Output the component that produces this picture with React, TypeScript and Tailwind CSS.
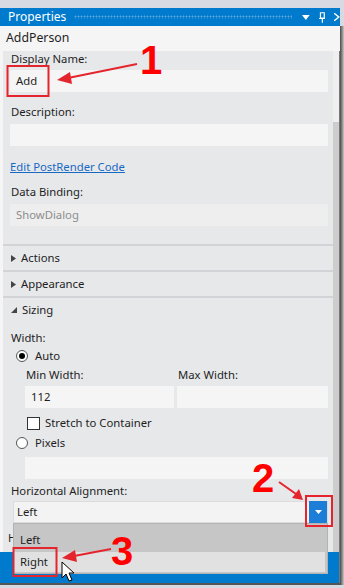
import React from "react";

const font = { fontFamily: '"Segoe UI", "Noto Sans", "Open Sans", sans-serif' };

const Label = ({ children, className = "" }: { children: React.ReactNode; className?: string }) => (
  <div className={`h-[16px] leading-[16px] text-[11.3px] text-[#1e1e1e] ${className}`}>{children}</div>
);

const Input = ({ value = "", className = "", muted = false }: { value?: string; className?: string; muted?: boolean }) => (
  <div
    className={`h-[22px] flex items-center px-[6px] text-[11.3px] ${
      muted ? "bg-[#eeeeef] text-[#8d8d8d]" : "bg-[#f5f5f5] text-[#1e1e1e]"
    } ${className}`}
  >
    {value}
  </div>
);

const Section = ({ title, open = false }: { title: string; open?: boolean }) => (
  <div className="border-t-2 border-[#d2d3d6]">
    <div className="h-[24px] flex items-center gap-[5px] pl-[8px] text-[11.3px] text-[#1e1e1e]">
      {open ? (
        <svg width="6" height="6" viewBox="0 0 6 6">
          <path d="M6 0 L6 6 L0 6 Z" fill="#444" />
        </svg>
      ) : (
        <svg width="5" height="7" viewBox="0 0 5 7">
          <path d="M0 0 L5 3.5 L0 7 Z" fill="#444" />
        </svg>
      )}
      <span>{title}</span>
    </div>
  </div>
);

const Radio = ({ label, checked = false }: { label: string; checked?: boolean }) => (
  <div className="h-[16px] flex items-center gap-[7px] pl-[8px] text-[11.3px] text-[#1e1e1e]">
    <div className="w-[12px] h-[12px] rounded-full border border-[#555] bg-white flex items-center justify-center">
      {checked && <div className="w-[6px] h-[6px] rounded-full bg-black" />}
    </div>
    <span>{label}</span>
  </div>
);

export default function App() {
  return (
    <div className="relative w-[344px] h-[588px] bg-[#d8dae3] overflow-hidden" style={font}>
      <div className="h-[8px]" />
      <div className="flex">
        <div className="w-[340px] flex flex-col">
          {/* title bar */}
          <div className="h-[18px] bg-[#007acc] flex items-center pl-[8px] text-white text-[12px]">
            <span>Properties</span>
            <div className="ml-[8px] w-[227px] h-[4px] bg-[radial-gradient(circle,#59a7e0_0.8px,transparent_1.2px)] bg-[length:3px_3px]" />
            <svg className="ml-[10px]" width="8" height="5" viewBox="0 0 8 5">
              <path d="M0 0 L8 0 L4 5 Z" fill="white" />
            </svg>
            <svg className="ml-[9px]" width="7" height="11" viewBox="0 0 7 11">
              <path d="M1.5 0.5 H5.5 V6 H1.5 Z M0 6.5 H7 M3.5 6.5 V11" stroke="white" strokeWidth="1.2" fill="none" />
            </svg>
            <svg className="ml-[9px]" width="6" height="8" viewBox="0 0 6 8">
              <path d="M0 0 L5 4 L0 8" stroke="white" strokeWidth="1.5" fill="none" />
            </svg>
          </div>
          {/* selected element */}
          <div className="h-[25px] bg-[#f5f5f5] flex items-center pl-[6px] text-[12.3px] text-[#1e1e1e]">AddPerson</div>
          {/* body */}
          <div className="h-[501px] flex bg-[#f5f5f5] border-r border-[#777]">
            <div className="flex-1 ml-[3px] bg-[#e7e8ea]">
              <div className="pl-[7px] pr-[5px]">
                <Label className="pl-[1px]">Display Name:</Label>
                <Input value="Add" className="mt-[3px]" />
                <Label className="mt-[12px] pl-[1px]">Description:</Label>
                <Input className="mt-[4px]" />
                <div className="mt-[13px] h-[16px] leading-[16px] text-[11.3px] text-[#1769c4] underline">Edit PostRender Code</div>
                <Label className="mt-[9px] pl-[1px]">Data Binding:</Label>
                <Input value="ShowDialog" muted className="mt-[4px]" />
              </div>
              <div className="mt-[18px]">
                <Section title="Actions" />
                <Section title="Appearance" />
                <Section title="Sizing" open />
              </div>
              <div className="pl-[7px] pr-[5px]">
                <Label className="mt-[8px] pl-[1px]">Width:</Label>
                <div className="mt-[2px] -ml-[2px]">
                  <Radio label="Auto" checked />
                </div>
                <div className="pl-[15px]">
                  <div className="mt-[3px] grid grid-cols-[149px_1fr] gap-x-[3px] gap-y-[3px]">
                    <Label className="pl-[1px]">Min Width:</Label>
                    <Label className="pl-[1px]">Max Width:</Label>
                    <Input value="112" />
                    <Input />
                  </div>
                  <div className="mt-[7px] h-[16px] flex items-center gap-[5px] pl-[2px] text-[11.3px] text-[#1e1e1e]">
                    <div className="w-[13px] h-[13px] border border-[#333] bg-white" />
                    <span>Stretch to Container</span>
                  </div>
                </div>
                <div className="mt-[4px] -ml-[2px]">
                  <Radio label="Pixels" />
                </div>
                <Input className="mt-[6px] ml-[15px]" />
                <Label className="mt-[4px] pl-[1px]">Horizontal Alignment:</Label>
                <div className="relative mt-[2px] ml-[3px] h-[22px] bg-[#f3f3f3] border border-[#dcdcdc] flex items-center">
                  <span className="pl-[3px] text-[11.3px] text-[#1e1e1e]">Left</span>
                  <div className="ml-auto w-[18px] h-[22px] -my-px bg-[#1c7ed6] flex items-center justify-center">
                    <svg width="7" height="4" viewBox="0 0 7 4">
                      <path d="M0 0 L7 0 L3.5 4 Z" fill="white" />
                    </svg>
                  </div>
                  {/* open list */}
                  <div className="absolute left-[-1px] right-[-1px] top-[21px] h-[51px] bg-[#c6c6c6] border border-[#b3b3b3] z-10 pt-[6px]">
                    <div className="h-[20px] flex items-center pl-[6px] text-[11.3px] text-[#1e1e1e]">Left</div>
                    <div className="mt-[2px] mr-[2px] h-[20px] bg-[#e1e1e1] flex items-center pl-[6px] text-[11.3px] text-[#1e1e1e]">Right</div>
                  </div>
                </div>
                <Label className="mt-[7px] -ml-[2px]">Height:</Label>
              </div>
            </div>
            <div className="w-[6px] flex flex-col">
              <div className="h-[71px] bg-[#efefef]" />
              <div className="flex-1 bg-[#cdcdcd]" />
            </div>
          </div>
          <div className="h-[31px] bg-[#007acc] border-r border-[#777]" />
          <div className="h-[2px] bg-[#555]" />
        </div>
        <div className="w-[4px] mt-[18px] bg-gradient-to-r from-[#4a4a4a] to-[#c8c8c8]" />
      </div>

      {/* annotations */}
      <svg className="absolute inset-0 pointer-events-none z-20" width="344" height="588" viewBox="0 0 344 588">
        <g stroke="#e5252d" strokeWidth="2" fill="none">
          <rect x="7.5" y="66" width="41" height="30" />
          <rect x="306" y="496" width="26" height="30" />
          <rect x="13.5" y="548" width="43" height="28" />
          <line x1="137" y1="64" x2="68" y2="78" />
          <line x1="279" y1="482" x2="296" y2="494" />
          <line x1="111" y1="549" x2="74" y2="556" />
        </g>
        <g fill="#e5252d">
          <path d="M57 80 L70 72 L72 84 Z" />
          <path d="M303 500 L292 498 L299 489 Z" />
          <path d="M62 558 L75 550 L77 562 Z" />
        </g>
        {/* cursor */}
        <path
          d="M62 562 L62 578 L66 574 L69 581 L72 580 L69 573 L74 573 Z"
          fill="white"
          stroke="black"
          strokeWidth="1"
          strokeLinejoin="round"
        />
      </svg>
      <div className="absolute left-[140px] top-[40px] z-20 text-[40px] font-bold leading-none text-[#ff0000]" style={{ fontFamily: '"Liberation Sans", Arial, sans-serif' }}>1</div>
      <div className="absolute left-[252px] top-[458px] z-20 text-[40px] font-bold leading-none text-[#ff0000]" style={{ fontFamily: '"Liberation Sans", Arial, sans-serif' }}>2</div>
      <div className="absolute left-[111px] top-[531px] z-20 text-[40px] font-bold leading-none text-[#ff0000]" style={{ fontFamily: '"Liberation Sans", Arial, sans-serif' }}>3</div>
    </div>
  );
}
